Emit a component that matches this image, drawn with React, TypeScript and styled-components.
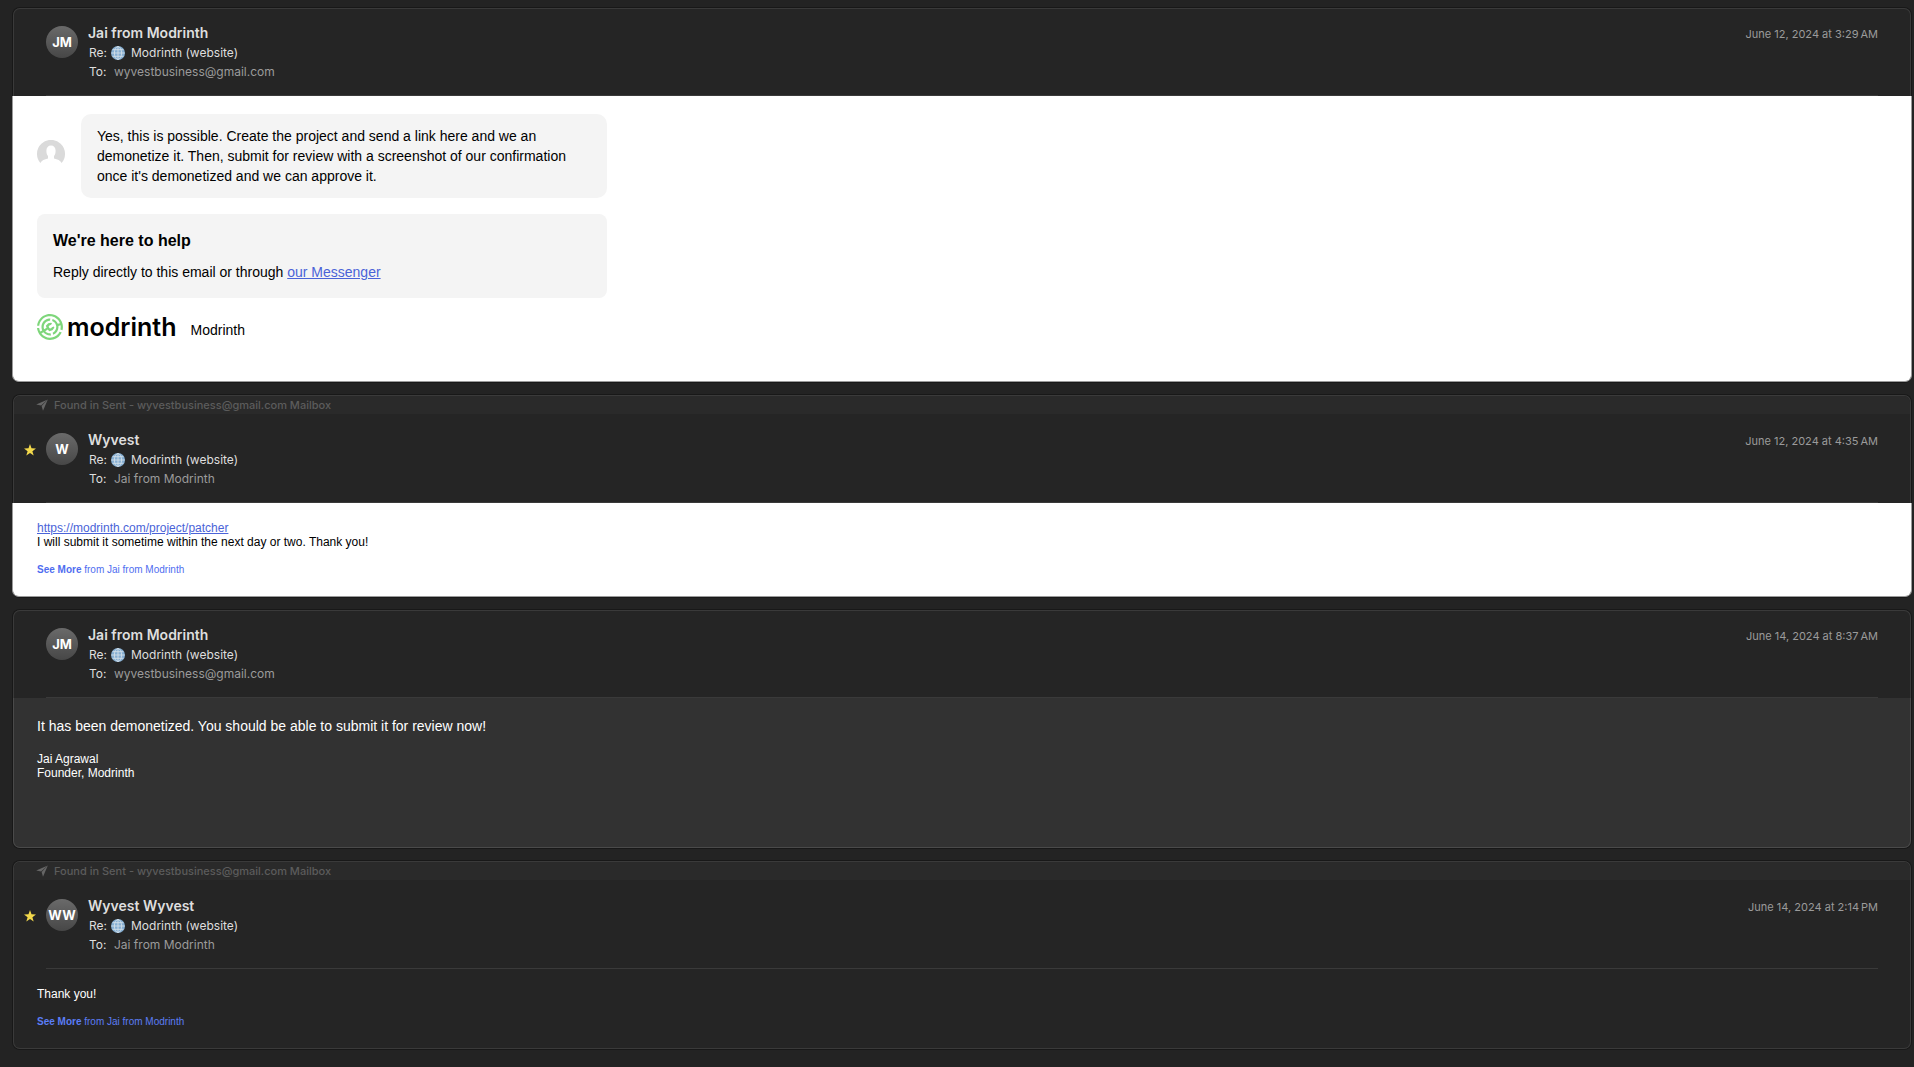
import React from 'react';
import styled, { createGlobalStyle, css } from 'styled-components';

const ui = 'Inter, "Noto Sans", sans-serif';
const mail = '"Liberation Sans", Arial, sans-serif';

const GlobalStyle = createGlobalStyle`
  * { box-sizing: border-box; }
  body { margin: 0; background: #232323; font-family: ${ui}; }
  p, h1, h2, h3 { margin: 0; }
  svg { display: block; flex: none; }
`;

type Tone = 'light' | 'raised' | 'plain';

const Thread = styled.main`
  display: flex;
  flex-direction: column;
  gap: 13px;
  padding: 8px 3px 18px 13px;
`;

const Card = styled.article`
  border-radius: 7px;
  background: #252525;
  box-shadow: 0 0 0 1px #181818;
`;

const Top = styled.div`
  border: 1px solid #3a3a3a;
  border-bottom: 0;
  border-radius: 7px 7px 0 0;
  overflow: hidden;
`;

const Mailbox = styled.div`
  display: flex;
  align-items: center;
  gap: 6px;
  height: 18px;
  padding: 0 22px;
  background: #2a2a2a;
  color: #5c5c5c;
  font-size: 11px;
  font-weight: 500;
  line-height: 18px;
`;

const Header = styled.header<{ $sent?: boolean }>`
  display: grid;
  grid-template-columns: 32px 32px minmax(0, 1fr) auto;
  padding: ${(p) => (p.$sent ? 17 : 15)}px 32px 0 0;
`;

const Flag = styled.div`
  padding: 13px 0 0 10px;
`;

const Avatar = styled.div`
  display: flex;
  align-items: center;
  justify-content: center;
  width: 32px;
  height: 32px;
  margin-top: 2px;
  border-radius: 50%;
  background: linear-gradient(#6a6a6a, #474747);
  color: #fff;
  font-size: 13px;
  font-weight: 700;
`;

const Meta = styled.div`
  padding-left: 10px;
  color: #dedede;
  font-size: 12px;
  line-height: 19px;
`;

const Sender = styled.h2`
  margin-bottom: 2px;
  font-size: 14px;
  font-weight: 600;
  line-height: 17px;
`;

const MetaRow = styled.p`
  display: flex;
  align-items: center;
  padding-left: 1px;
`;

const Label = styled.span`
  width: 22px;
`;

const Subject = styled.span`
  padding-left: 6px;
`;

const Recipient = styled.span`
  padding-left: 3px;
  color: #9b9b9b;
`;

const Stamp = styled.time`
  color: #9b9b9b;
  font-size: 11px;
  line-height: 21px;
`;

const Divider = styled.hr`
  height: 1px;
  margin: 14px 32px 0;
  border: 0;
  background: #3a3a3a;
`;

const tones = {
  light: css`
    margin: 0 -1px;
    padding-left: 24px;
    padding-right: 24px;
    border-color: #9a9a9a;
    background: #fff;
    color: #000;
  `,
  raised: css`
    border-color: #4a4a4a;
    background: #323232;
    color: #fff;
  `,
  plain: css`
    border-color: #3a3a3a;
    background: #252525;
    color: #fff;
  `,
};

const Body = styled.div<{ $tone: Tone; $bottom: number }>`
  padding: 18px 23px ${(p) => p.$bottom}px;
  border: 1px solid;
  border-top: 0;
  border-radius: 0 0 7px 7px;
  font-family: ${mail};
  font-size: 12px;
  line-height: 14px;
  ${(p) => tones[p.$tone]}
`;

const Reply = styled.div`
  display: flex;
  align-items: center;
  gap: 16px;
  max-width: 570px;
`;

const Photo = styled.div`
  padding-bottom: 4px;
`;

const Bubble = styled.div`
  flex: 1;
  padding: 12px 32px 12px 16px;
  border-radius: 10px;
  background: #f4f4f4;
  font-size: 14px;
  line-height: 20px;
`;

const Help = styled.section`
  max-width: 570px;
  margin-top: 16px;
  padding: 16px;
  border-radius: 8px;
  background: #f4f4f4;
  font-size: 14px;
  line-height: 20px;
`;

const HelpTitle = styled.h3`
  margin-bottom: 10px;
  font-size: 16px;
  line-height: 22px;
`;

const Signature = styled.div`
  display: flex;
  align-items: center;
  gap: 14px;
  margin-top: 16px;
  font-size: 14px;
  line-height: 20px;
`;

const Brand = styled.div`
  display: flex;
  align-items: center;
  gap: 4px;
  font-family: ${ui};
  font-size: 25px;
  font-weight: 600;
  line-height: 26px;
`;

const Caption = styled.span`
  padding-top: 6px;
`;

const Link = styled.a`
  color: #4a63d8;
`;

const More = styled.button<{ $dark?: boolean }>`
  display: block;
  margin-top: 14px;
  padding: 0;
  border: 0;
  background: none;
  color: ${(p) => (p.$dark ? '#5b7df5' : '#4f6df0')};
  font-family: ${mail};
  font-size: 10px;
  line-height: 14px;
`;

const Statement = styled.p`
  font-size: 14px;
  line-height: 20px;
  margin-bottom: 16px;
`;

const Globe = () => (
  <svg width="14" height="14" viewBox="0 0 14 14" aria-hidden="true">
    <circle cx="7" cy="7" r="7" fill="#85aed2" />
    <g fill="none" stroke="#d3dfe8" strokeWidth="0.9">
      <path d="M7 .4v13.2M.4 7h13.2M1.6 3.7h10.8M1.6 10.3h10.8" />
      <ellipse cx="7" cy="7" rx="3.6" ry="6.5" />
    </g>
  </svg>
);

const Star = () => (
  <svg width="12" height="12" viewBox="0 0 12 12" role="img" aria-label="Flagged">
    <path
      d="M6 0l1.5 4.3 4.5.1-3.6 2.8 1.3 4.4L6 9 2.3 11.6l1.3-4.4L0 4.4l4.5-.1z"
      fill="#f2d84b"
    />
  </svg>
);

const Plane = () => (
  <svg width="12" height="12" viewBox="0 0 12 12" aria-hidden="true">
    <path d="M11.8.6L7 11.8 5.6 7z" fill="#666" />
    <path d="M11.8.6L.2 5.4l4.9 1z" fill="#666" />
  </svg>
);

const Person = () => (
  <svg width="28" height="28" viewBox="0 0 28 28" aria-hidden="true">
    <path
      d="M3.4 23A14 14 0 1 1 24.6 23C23.2 20.6 20.6 19.4 17 18.6V16C18.2 14.8 18.6 13.2 18.6 10.6 18.6 7.4 16.8 5.4 14 5.4S9.4 7.4 9.4 10.6C9.4 13.2 9.8 14.8 11 16V18.6C7.4 19.4 4.8 20.6 3.4 23Z"
      fill="#dadada"
    />
  </svg>
);

const Mark = () => (
  <svg width="26" height="26" viewBox="0 0 512 514" aria-hidden="true">
    <g fill="#7ed67b">
      <path d="M503.16 323.56C514.55 281.47 515.32 235.91 503.2 190.76C466.57 54.23 326.04 -26.8 189.33 9.78C83.81 38.02 11.39 128.07 .69 230.47H43.99C54.29 147.33 113.74 74.73 199.75 51.71C306.05 23.26 415.13 80.67 453.17 181.38L411.03 192.65C391.64 145.8 352.57 111.45 306.3 96.82L298.56 140.66C335.09 154.13 364.72 184.5 375.56 224.91C391.36 283.8 361.94 344.14 308.56 369.17L320.09 412.16C390.25 383.21 432.4 310.3 422.43 235.14L464.41 223.91C468.91 252.62 467.35 281.16 460.55 308.07L503.16 323.56Z" />
      <path d="M321.99 504.22C185.27 540.8 44.75 459.77 8.11 323.24C3.84 307.31 1.17 291.33 0 275.46H43.27C44.36 287.37 46.47 299.35 49.68 311.29C53.04 323.8 57.45 335.75 62.79 347.07L101.38 323.92C98.13 316.42 95.39 308.6 93.21 300.47C69.17 210.87 122.41 118.77 212.13 94.76C229.13 90.21 246.23 88.44 262.93 89.15L255.19 133C244.73 133.05 234.11 134.42 223.53 137.25C157.31 154.98 118.01 222.95 135.75 289.09C136.85 293.16 138.13 297.13 139.59 300.99L188.94 271.38L174.07 231.95L220.67 184.08L279.57 171.39L296.62 192.38L269.47 219.88L245.79 227.33L228.87 244.72L237.16 267.79C237.16 267.79 253.95 285.63 253.98 285.64L277.7 279.33L294.58 260.79L331.44 249.12L342.42 273.82L304.39 320.45L240.66 340.63L212.08 308.81L162.26 338.7C187.8 367.78 226.2 383.93 266.01 380.56L277.54 423.55C218.13 431.41 160.1 406.82 124.05 361.64L85.64 384.68C136.25 451.17 223.84 484.11 309.61 461.16C371.35 444.64 419.4 402.56 445.42 349.38L488.06 364.88C457.17 431.16 398.22 483.82 321.99 504.22Z" />
    </g>
  </svg>
);

interface MessageProps {
  from: string;
  initials: string;
  to: string;
  date: string;
  tone: Tone;
  bottom: number;
  sent?: boolean;
  children: React.ReactNode;
}

const Message = ({ from, initials, to, date, tone, bottom, sent, children }: MessageProps) => (
  <Card>
    <Top>
      {sent && (
        <Mailbox>
          <Plane />
          Found in Sent - wyvestbusiness@gmail.com Mailbox
        </Mailbox>
      )}
      <Header $sent={sent}>
        <Flag>{sent && <Star />}</Flag>
        <Avatar>{initials}</Avatar>
        <Meta>
          <Sender>{from}</Sender>
          <MetaRow>
            <Label>Re:</Label>
            <Globe />
            <Subject>Modrinth (website)</Subject>
          </MetaRow>
          <MetaRow>
            <Label>To:</Label>
            <Recipient>{to}</Recipient>
          </MetaRow>
        </Meta>
        <Stamp>{date}</Stamp>
      </Header>
      <Divider />
    </Top>
    <Body $tone={tone} $bottom={bottom}>
      {children}
    </Body>
  </Card>
);

export default function App() {
  return (
    <>
      <GlobalStyle />
      <Thread>
        <Message
          from="Jai from Modrinth"
          initials="JM"
          to="wyvestbusiness@gmail.com"
          date={'June 12, 2024 at 3:29\u202fAM'}
          tone="light"
          bottom={41}
        >
          <Reply>
            <Photo>
              <Person />
            </Photo>
            <Bubble>
              Yes, this is possible. Create the project and send a link here and we an demonetize it.
              Then, submit for review with a screenshot of our confirmation once it's demonetized and
              we can approve it.
            </Bubble>
          </Reply>
          <Help>
            <HelpTitle>We're here to help</HelpTitle>
            <p>
              Reply directly to this email or through <Link href="#messenger">our Messenger</Link>
            </p>
          </Help>
          <Signature>
            <Brand>
              <Mark />
              modrinth
            </Brand>
            <Caption>Modrinth</Caption>
          </Signature>
        </Message>

        <Message
          from="Wyvest"
          initials="W"
          to="Jai from Modrinth"
          date={'June 12, 2024 at 4:35\u202fAM'}
          tone="light"
          bottom={19}
          sent
        >
          <p>
            <Link href="https://modrinth.com/project/patcher">https://modrinth.com/project/patcher</Link>
          </p>
          <p>I will submit it sometime within the next day or two. Thank you!</p>
          <More type="button">
            <b>See More</b> from Jai from Modrinth
          </More>
        </Message>

        <Message
          from="Jai from Modrinth"
          initials="JM"
          to="wyvestbusiness@gmail.com"
          date={'June 14, 2024 at 8:37\u202fAM'}
          tone="raised"
          bottom={67}
        >
          <Statement>It has been demonetized. You should be able to submit it for review now!</Statement>
          <p>Jai Agrawal</p>
          <p>Founder, Modrinth</p>
        </Message>

        <Message
          from="Wyvest Wyvest"
          initials="WW"
          to="Jai from Modrinth"
          date={'June 14, 2024 at 2:14\u202fPM'}
          tone="plain"
          bottom={19}
          sent
        >
          <p>Thank you!</p>
          <More type="button" $dark>
            <b>See More</b> from Jai from Modrinth
          </More>
        </Message>
      </Thread>
    </>
  );
}
